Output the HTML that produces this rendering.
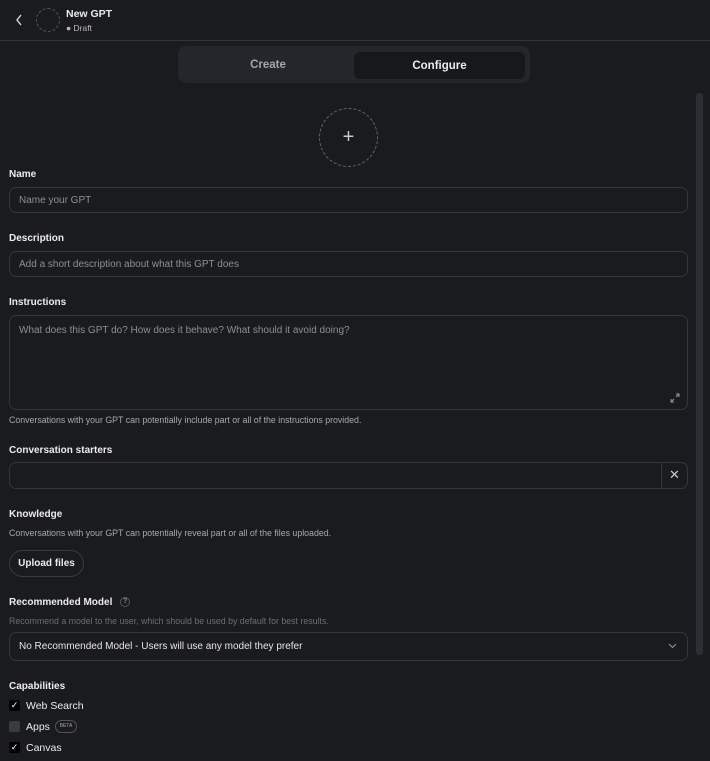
<!DOCTYPE html>
<html><head><style>
*{box-sizing:border-box;margin:0;padding:0}
body{width:710px;height:761px;background:#1a1b1f;color:#ececec;font-family:"Liberation Sans",sans-serif;position:relative;overflow:hidden;font-size:10.5px}
.abs{position:absolute}
.lbl{position:absolute;left:9px;font-weight:bold;font-size:10px;color:#ececec}
.inp{position:absolute;left:9px;width:679px;border:1px solid #35363b;border-radius:7px;color:#8e8f96;font-size:10px;padding-left:9px}
.small{position:absolute;left:9px;font-size:8.8px;color:#a8a9ae}
.cb{position:absolute;left:9px;width:11px;height:11px;border-radius:2px;background:#000;color:#fff;font-size:9px;line-height:11px;text-align:center}
</style></head><body>
<svg class="abs" style="left:14px;top:13px" width="10" height="14"><path d="M7 2 L3 7 L7 12" stroke="#ddd" stroke-width="1.4" fill="none"/></svg>
<div class="abs" style="left:36px;top:8px;width:24px;height:24px;border:1px dashed #555;border-radius:50%"></div>
<div class="abs" style="left:66px;top:8px;font-weight:bold;font-size:10.5px">New GPT</div>
<div class="abs" style="left:66px;top:23px;font-size:8.5px;color:#bbb">● Draft</div>
<div class="abs" style="left:0;top:40px;width:710px;height:1px;background:#34353a"></div>
<div class="abs" style="left:178px;top:46px;width:352px;height:37px;background:#25262b;border-radius:8px"></div>
<div class="abs" style="left:268px;top:59px;font-size:11.5px;color:#a5a6ab;font-weight:bold;transform:translateX(-50%)">Create</div>
<div class="abs" style="left:354px;top:52px;width:171px;height:27px;background:#17181b;border-radius:6px;text-align:center;line-height:28px;font-size:11.5px;font-weight:bold">Configure</div>
<div class="abs" style="left:696px;top:93px;width:7px;height:562px;background:#2e2f34;border-radius:3px"></div>
<div class="abs" style="left:319px;top:108px;width:59px;height:59px;border:1px dashed #66676c;border-radius:50%;text-align:center;line-height:56px;font-size:20px;color:#ccc">+</div>
<div class="lbl" style="top:169px">Name</div>
<div class="inp" style="top:187px;height:26px;line-height:25px">Name your GPT</div>
<div class="lbl" style="top:233px">Description</div>
<div class="inp" style="top:251px;height:26px;line-height:25px">Add a short description about what this GPT does</div>
<div class="lbl" style="top:297px">Instructions</div>
<div class="inp" style="top:315px;height:95px;padding-top:9px">What does this GPT do? How does it behave? What should it avoid doing?</div>
<svg class="abs" style="left:670px;top:393px" width="10" height="10"><path d="M6 1h3v3M9 1L6 4M4 9H1V6M1 9l3-3" stroke="#999" fill="none"/></svg>
<div class="small" style="top:415px">Conversations with your GPT can potentially include part or all of the instructions provided.</div>
<div class="lbl" style="top:445px">Conversation starters</div>
<div class="inp" style="top:462px;height:27px"></div>
<div class="abs" style="left:661px;top:463px;width:1px;height:25px;background:#35363b"></div>
<div class="abs" style="left:669px;top:467px;font-size:13px;color:#ccc">✕</div>
<div class="lbl" style="top:509px">Knowledge</div>
<div class="small" style="top:528px">Conversations with your GPT can potentially reveal part or all of the files uploaded.</div>
<div class="abs" style="left:9px;top:550px;width:75px;height:27px;border:1px solid #3b3c41;border-radius:14px;text-align:center;line-height:26px;font-weight:bold;font-size:10px">Upload files</div>
<div class="lbl" style="top:597px">Recommended Model <span style="display:inline-block;width:10px;height:10px;border:1px solid #555;border-radius:50%;font-size:7px;text-align:center;line-height:8px;color:#888;margin-left:5px;vertical-align:middle">?</span></div>
<div class="small" style="top:616px;color:#6d6e73">Recommend a model to the user, which should be used by default for best results.</div>
<div class="inp" style="top:632px;height:29px;line-height:28px;color:#e6e6e6">No Recommended Model - Users will use any model they prefer</div>
<svg class="abs" style="left:668px;top:643px" width="9" height="6"><path d="M1 1l3.5 3.5L8 1" stroke="#999" fill="none"/></svg>
<div class="lbl" style="top:681px">Capabilities</div>
<div class="cb" style="top:700px">✓</div><div class="abs" style="left:26px;top:700px">Web Search</div>
<div class="cb" style="top:721px;background:#3a3b40"></div><div class="abs" style="left:26px;top:721px">Apps</div>
<div class="abs" style="left:55px;top:720px;width:22px;height:13px;border:1px solid #555;border-radius:7px;font-size:5px;line-height:11px;text-align:center;color:#aaa">BETA</div>
<div class="cb" style="top:742px">✓</div><div class="abs" style="left:26px;top:742px">Canvas</div>
</body></html>
